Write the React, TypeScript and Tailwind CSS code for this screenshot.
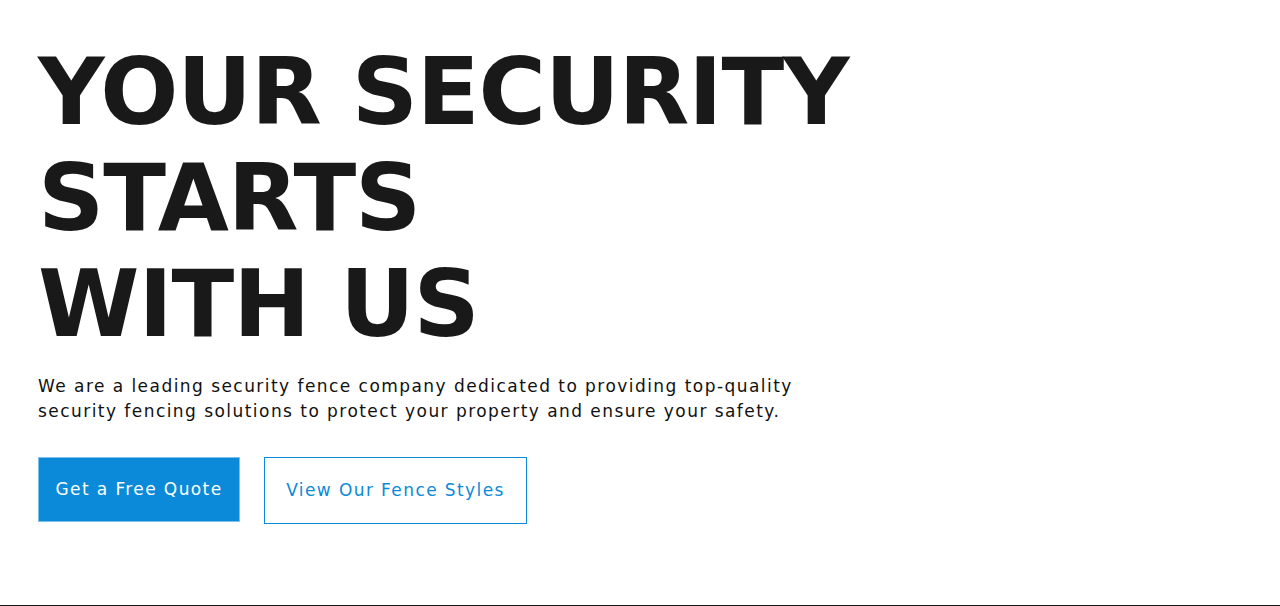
export default function App() {
  return (
    <section
      className="h-[606px] border-b border-[#1a1a1a] bg-white px-[38px] pt-[40px]"
      style={{ fontFamily: '"DejaVu Sans", sans-serif' }}
    >
      <h1 className="text-[92px] font-bold leading-[106px] tracking-[-1.1px] text-[#191919]">
        <span className="block">YOUR SECURITY</span>
        <span className="block">STARTS</span>
        <span className="block">WITH US</span>
      </h1>
      <p className="mt-[16px] max-w-[800px] text-[17px] leading-[25px] tracking-[1.45px] text-[#111111]">
        We are a leading security fence company dedicated to providing top-quality security fencing solutions to
        protect your property and ensure your safety.
      </p>
      <div className="mt-[33px] flex items-start gap-[24px]">
        <a
          href="#"
          className="flex h-[65px] w-[202px] items-center justify-center border border-[#7cc0ee] bg-[#0b8ad9] text-[17px] tracking-[1.4px] text-white"
        >
          Get a Free Quote
        </a>
        <a
          href="#"
          className="flex h-[67px] w-[263px] items-center justify-center border border-[#0b8ad9] bg-white text-[17px] tracking-[1.4px] text-[#0b8ad9]"
        >
          View Our Fence Styles
        </a>
      </div>
    </section>
  );
}
